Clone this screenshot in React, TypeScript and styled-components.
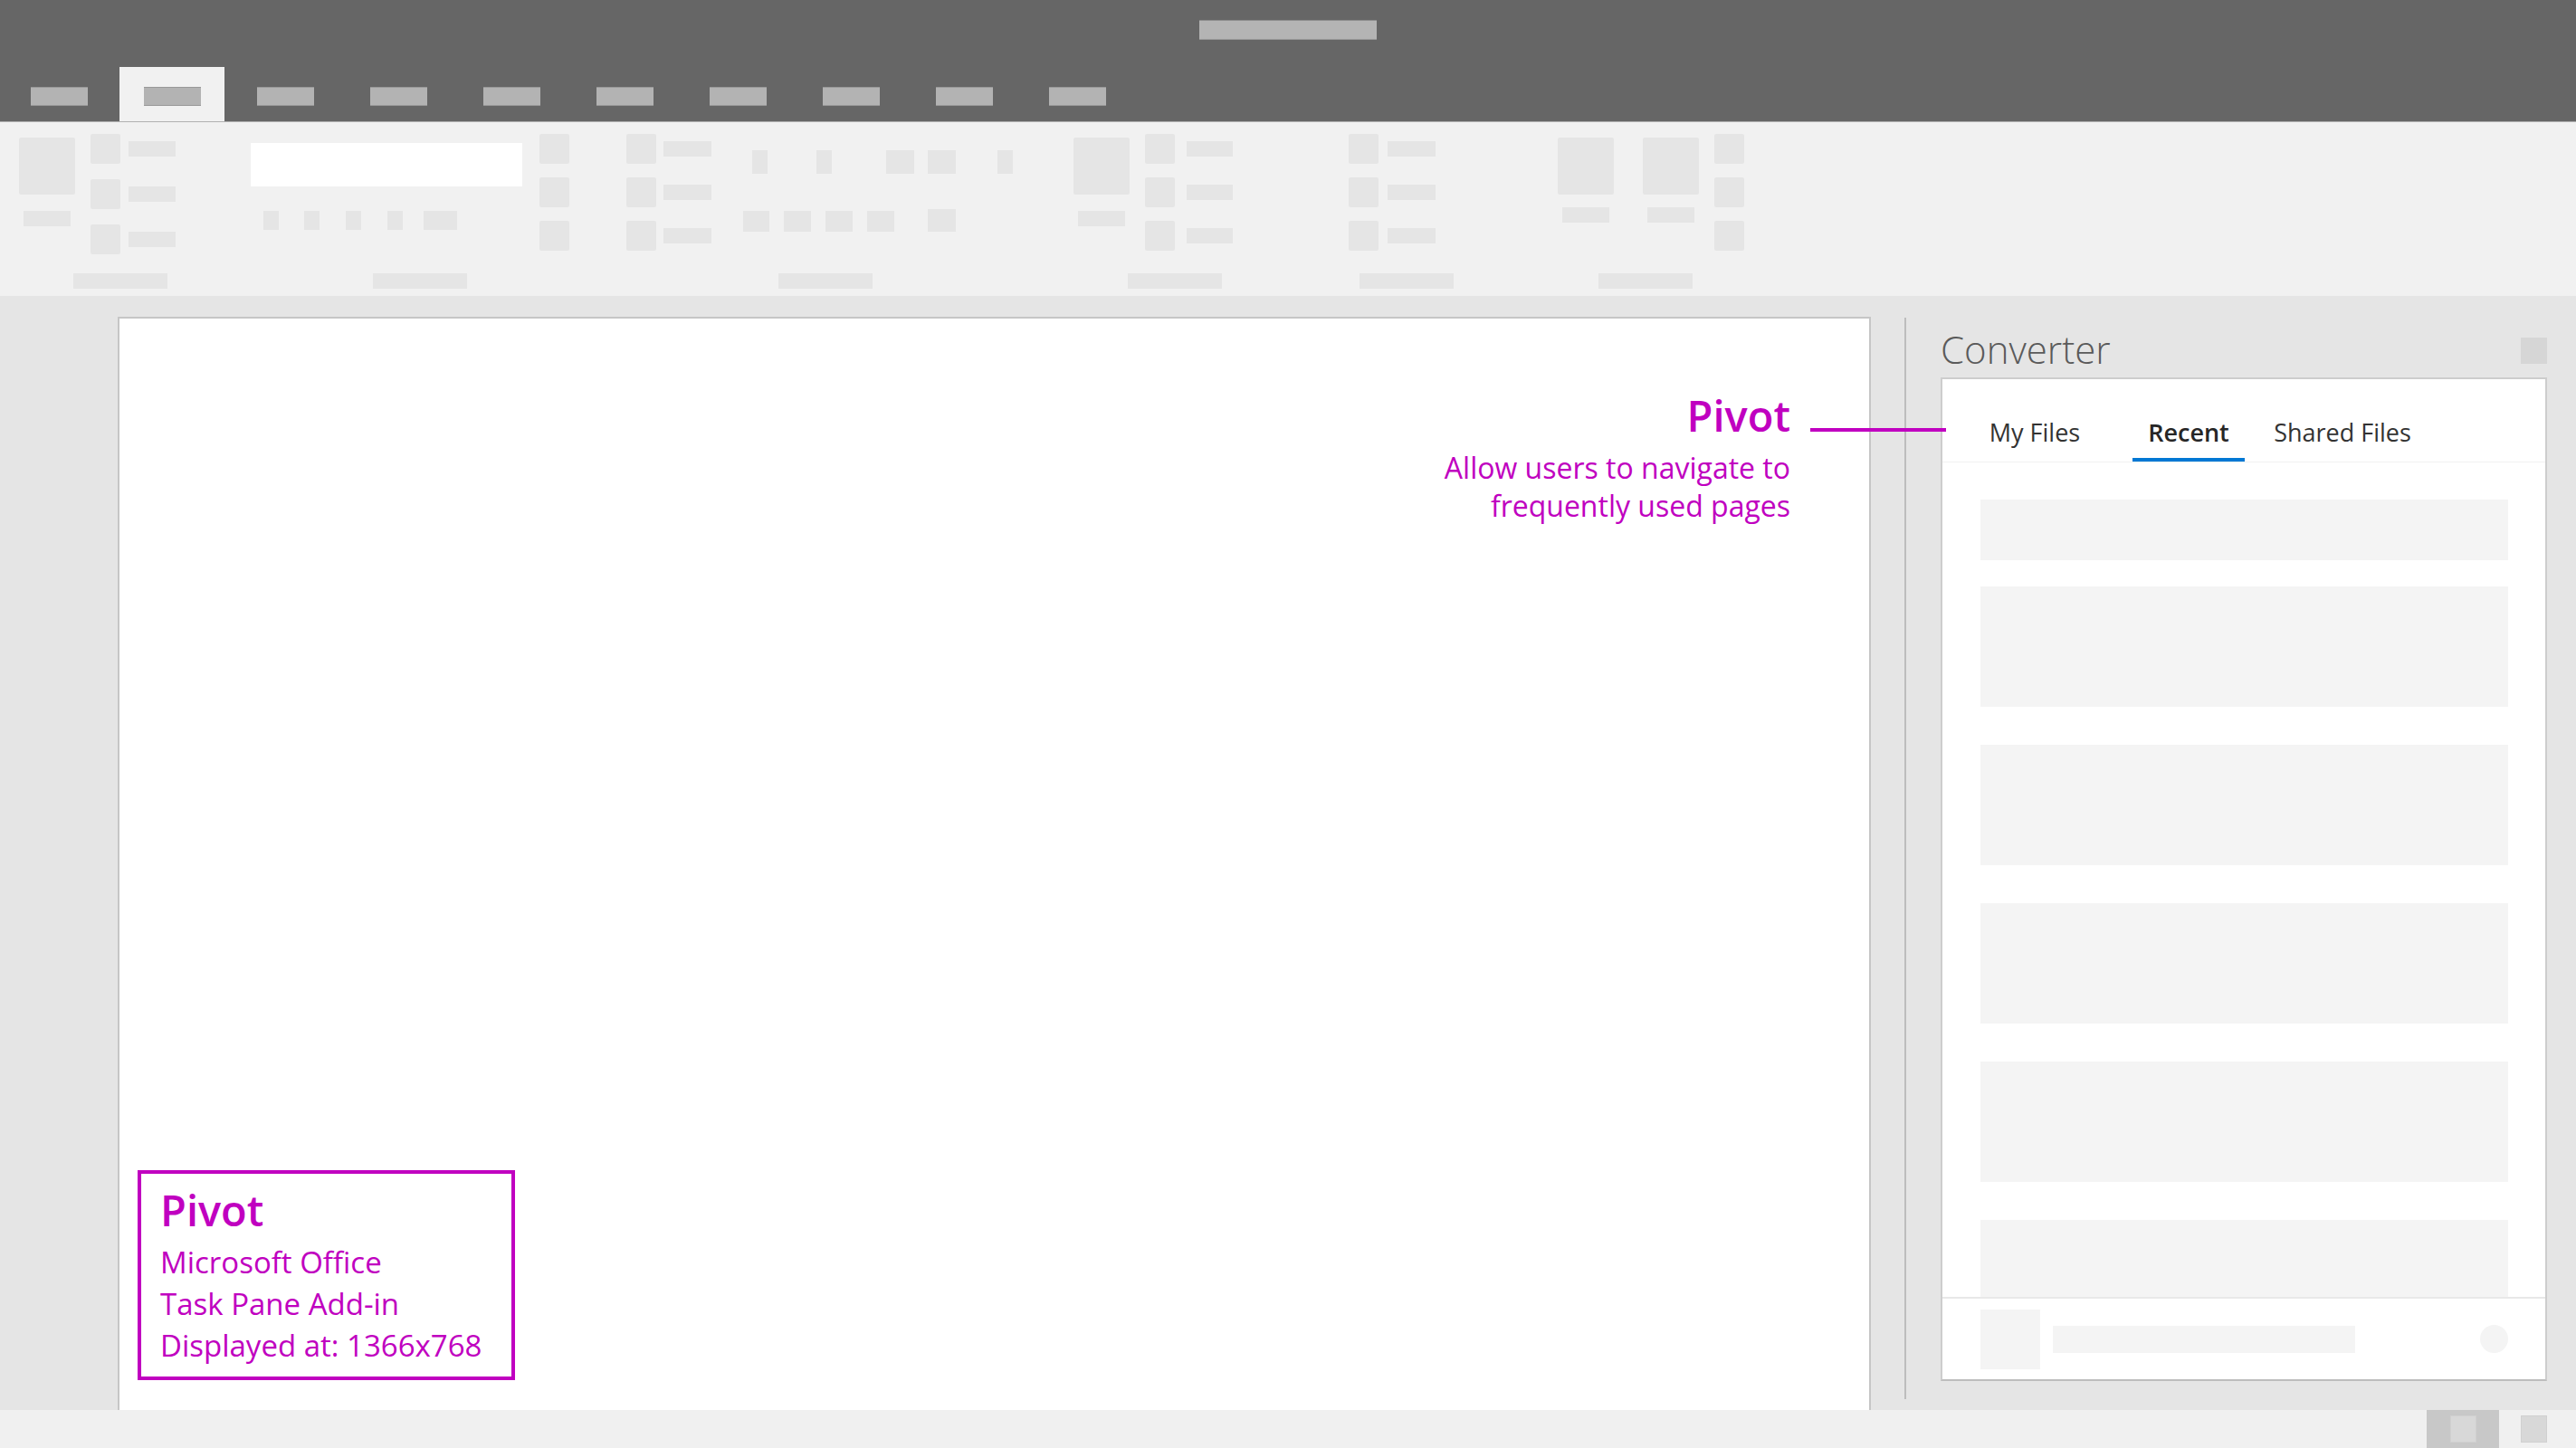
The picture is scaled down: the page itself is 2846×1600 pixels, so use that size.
import React from "react"
import styled, { createGlobalStyle } from "styled-components"

const magenta = "#c000c0"
const chip = "#e5e5e5"

const GlobalStyle = createGlobalStyle`
  html, body {
    margin: 0;
    padding: 0;
    background: #e5e5e5;
    font-family: "Open Sans", "Noto Sans", "Liberation Sans", sans-serif;
  }
`

const Screen = styled.div`
  width: 2846px;
  height: 1600px;
  display: flex;
  flex-direction: column;
  overflow: hidden;
`

/* title bar + ribbon tabs */
const TitleBar = styled.div`
  height: 135px;
  flex: none;
  background: #666666;
  border-bottom: 1px solid #b0b0b0;
  box-sizing: border-box;
  display: flex;
  flex-direction: column;
`
const TitlePlaceholder = styled.div`
  width: 196px;
  height: 22px;
  margin: 22px auto 0;
  background: #b4b4b4;
  box-shadow: inset 0 1px 0 #8c8c8c, inset 0 -1px 0 #9a9a9a;
`
const TabStrip = styled.div`
  margin-top: auto;
  height: 60px;
  display: flex;
  gap: 9px;
  padding-left: 7px;
`
const Tab = styled.div<{ $active?: boolean }>`
  width: 116px;
  height: 100%;
  background: ${p => (p.$active ? "#f1f1f1" : "transparent")};
  display: flex;
  justify-content: center;
`
const TabLabel = styled.div`
  width: 63px;
  height: 21px;
  margin-top: 22px;
  background: #b3b3b3;
  box-shadow: inset 0 1px 0 #999, inset 0 -1px 0 #999;
`

/* ribbon */
const Ribbon = styled.div`
  height: 192px;
  flex: none;
  background: #f1f1f1;
  display: flex;
  padding-left: 21px;
  box-sizing: border-box;
`
const Group = styled.div<{ $w: number; $ml?: number }>`
  width: ${p => p.$w}px;
  margin-left: ${p => p.$ml || 0}px;
  flex: none;
  display: flex;
  flex-direction: column;
  padding: 13px 0 8px;
  box-sizing: border-box;
`
const GroupBody = styled.div`
  flex: 1;
  display: flex;
  align-items: flex-start;
`
const GroupLabel = styled.div<{ $ml: number }>`
  width: 104px;
  height: 17px;
  margin-left: ${p => p.$ml}px;
  background: ${chip};
`
const BigTool = styled.div<{ $ml?: number; $gap?: number }>`
  display: flex;
  flex-direction: column;
  align-items: center;
  margin-left: ${p => p.$ml || 0}px;
  padding-top: 4px;
  gap: ${p => p.$gap ?? 18}px;
`
const BigIcon = styled.div`
  width: 62px;
  height: 63px;
  border-radius: 2px;
  background: ${chip};
`
const Caption = styled.div<{ $w?: number; $ml?: number }>`
  width: ${p => p.$w || 52}px;
  height: 17px;
  margin-left: ${p => p.$ml || 0}px;
  background: ${chip};
`
const ToolStack = styled.div<{ $ml?: number; $gap?: number }>`
  display: flex;
  flex-direction: column;
  margin-left: ${p => p.$ml || 0}px;
  gap: ${p => p.$gap ?? 15}px;
`
const ToolRow = styled.div`
  display: flex;
  align-items: center;
`
const SmallIcon = styled.div`
  width: 33px;
  height: 33px;
  border-radius: 2px;
  background: ${chip};
`
const SearchBox = styled.div`
  width: 300px;
  height: 48px;
  margin-top: 10px;
  background: #ffffff;
`
const Column = styled.div<{ $ml?: number }>`
  display: flex;
  flex-direction: column;
  margin-left: ${p => p.$ml || 0}px;
`
const PipRow = styled.div<{ $mt: number; $ml?: number }>`
  display: flex;
  align-items: flex-end;
  margin-top: ${p => p.$mt}px;
  margin-left: ${p => p.$ml || 0}px;
`
const Pip = styled.div<{ $w: number; $h: number; $ml?: number }>`
  width: ${p => p.$w}px;
  height: ${p => p.$h}px;
  margin-left: ${p => p.$ml || 0}px;
  background: ${chip};
`

/* document area */
const Workspace = styled.div`
  flex: 1;
  min-height: 0;
  position: relative;
  display: flex;
  align-items: stretch;
  padding-top: 23px;
  box-sizing: border-box;
  background: #e5e5e5;
`
const Page = styled.div`
  position: relative;
  width: 1937px;
  margin-left: 130px;
  flex: none;
  background: #ffffff;
  border: 2px solid #c6c6c6;
  border-bottom: none;
  box-sizing: border-box;
`
const Divider = styled.div`
  width: 2px;
  flex: none;
  margin: 1px 0 12px 37px;
  background: #bdbdbd;
`

/* task pane */
const Pane = styled.div`
  width: 670px;
  margin-left: 38px;
  flex: none;
  display: flex;
  flex-direction: column;
  padding-bottom: 32px;
  box-sizing: border-box;
`
const PaneHeader = styled.div`
  height: 67px;
  flex: none;
  padding-top: 15px;
  box-sizing: border-box;
  display: flex;
  justify-content: space-between;
  align-items: flex-start;
`
const PaneTitle = styled.div`
  font-size: 42px;
  line-height: 42px;
  font-weight: 300;
  color: #5a5a5a;
`
const CloseBox = styled.div`
  width: 29px;
  height: 29px;
  margin-top: 8px;
  background: #d6d6d6;
`
const Card = styled.div`
  flex: 1;
  min-height: 0;
  display: flex;
  flex-direction: column;
  background: #ffffff;
  border: 2px solid #cdcdcd;
  border-bottom-color: #bdbdbd;
`
const PivotBar = styled.div`
  height: 92px;
  flex: none;
  display: flex;
  align-items: flex-end;
  padding-left: 17px;
  border-bottom: 1px solid #f2f2f2;
  box-sizing: border-box;
`
const PivotLink = styled.div`
  width: 170px;
  display: flex;
  justify-content: center;
  white-space: nowrap;
`
const PivotText = styled.span<{ $active?: boolean }>`
  font-size: 27px;
  line-height: 36px;
  padding: 0 17px 10px;
  font-weight: ${p => (p.$active ? 600 : 400)};
  color: ${p => (p.$active ? "#262626" : "#333333")};
  border-bottom: 4px solid ${p => (p.$active ? "#0078d4" : "transparent")};
`
const FileList = styled.div`
  flex: 1;
  min-height: 0;
  overflow: hidden;
  padding: 41px 41px 0 42px;
`
const FileItem = styled.div<{ $h: number; $mt: number }>`
  height: ${p => p.$h}px;
  margin-top: ${p => p.$mt}px;
  background: #f4f4f4;
`
const PaneFooter = styled.div`
  height: 91px;
  flex: none;
  display: flex;
  align-items: center;
  padding: 0 41px 0 42px;
  border-top: 2px solid #e8e8e8;
  box-sizing: border-box;
`
const Thumb = styled.div`
  width: 66px;
  height: 66px;
  background: #f4f4f4;
`
const FooterBar = styled.div`
  width: 334px;
  height: 30px;
  margin-left: 14px;
  background: #f4f4f4;
`
const FooterDot = styled.div`
  width: 31px;
  height: 31px;
  margin-left: auto;
  border-radius: 50%;
  background: #f4f4f4;
`

/* status bar */
const StatusBar = styled.div`
  height: 42px;
  flex: none;
  background: #f0f0f0;
  display: flex;
  justify-content: flex-end;
  padding-right: 8px;
`
const StatusButton = styled.div<{ $w: number; $active?: boolean }>`
  width: ${p => p.$w}px;
  height: 100%;
  display: flex;
  align-items: center;
  justify-content: center;
  background: ${p => (p.$active ? "#c8c8c8" : "transparent")};
`
const StatusGlyph = styled.div`
  width: 29px;
  height: 30px;
  background: #d8d8d8;
  box-shadow: inset 0 0 0 1px #d0d0d0;
`

/* magenta annotations laid over the mock */
const Callout = styled.div`
  position: absolute;
  top: 104px;
  right: 696px;
  display: flex;
  align-items: flex-start;
  z-index: 2;
`
const CalloutText = styled.div`
  text-align: right;
  color: ${magenta};
`
const NoteTitle = styled.div`
  font-size: 47px;
  line-height: 56px;
  font-weight: 600;
`
const NoteLine = styled.div<{ $size: number; $lh: number }>`
  font-size: ${p => p.$size}px;
  line-height: ${p => p.$lh}px;
  white-space: nowrap;
`
const CalloutDesc = styled.div`
  margin-top: 9px;
`
const Connector = styled.div`
  width: 150px;
  height: 4px;
  margin: 42px 0 0 22px;
  background: ${magenta};
`
const InfoBox = styled.div`
  position: absolute;
  left: 20px;
  bottom: 33px;
  width: 417px;
  height: 232px;
  box-sizing: border-box;
  border: 4px solid ${magenta};
  padding: 12px 0 0 21px;
  color: ${magenta};
`
const InfoBody = styled.div`
  margin-top: 7px;
`

const tabs = Array.from({ length: 10 }, (_, i) => i)
const pivots = ["My Files", "Recent", "Shared Files"]
const files = [
  { h: 67, mt: 0 },
  { h: 133, mt: 29 },
  { h: 133, mt: 42 },
  { h: 133, mt: 42 },
  { h: 133, mt: 42 },
  { h: 133, mt: 42 }
]

// [width, left gap, height] of the little ribbon chips
const groupBPips = [[17, 0, 21], [17, 28, 21], [17, 29, 21], [17, 29, 21], [37, 23, 21]]
const groupCTop = [[17, 10, 26], [17, 54, 26], [31, 60, 26], [31, 15, 26], [17, 46, 26]]
const groupCBottom = [[29, 0, 23], [30, 16, 23], [30, 16, 23], [30, 16, 23], [31, 37, 25]]

function IconStack(props: { ml?: number; gap?: number }) {
  return (
    <ToolStack $ml={props.ml} $gap={props.gap}>
      <SmallIcon />
      <SmallIcon />
      <SmallIcon />
    </ToolStack>
  )
}

function CommandStack(props: { ml?: number; gap?: number; captionMl?: number; captionW?: number }) {
  return (
    <ToolStack $ml={props.ml} $gap={props.gap}>
      {[0, 1, 2].map(i => (
        <ToolRow key={i}>
          <SmallIcon />
          <Caption $ml={props.captionMl ?? 10} $w={props.captionW ?? 52} />
        </ToolRow>
      ))}
    </ToolStack>
  )
}

function Pips(props: { items: number[][]; mt: number; ml?: number }) {
  return (
    <PipRow $mt={props.mt} $ml={props.ml}>
      {props.items.map(([w, ml, h], i) => (
        <Pip key={i} $w={w} $h={h} $ml={ml} />
      ))}
    </PipRow>
  )
}

function RibbonArea() {
  return (
    <Ribbon>
      <Group $w={173}>
        <GroupBody>
          <BigTool>
            <BigIcon />
            <Caption />
          </BigTool>
          <CommandStack ml={17} gap={17} captionMl={9} />
        </GroupBody>
        <GroupLabel $ml={60} />
      </Group>

      <Group $w={352} $ml={83}>
        <GroupBody>
          <Column>
            <SearchBox />
            <Pips items={groupBPips} mt={27} ml={14} />
          </Column>
          <IconStack ml={19} />
        </GroupBody>
        <GroupLabel $ml={135} />
      </Group>

      <Group $w={427} $ml={63}>
        <GroupBody>
          <CommandStack captionMl={8} captionW={53} />
          <Column $ml={35}>
            <Pips items={groupCTop} mt={18} />
            <Pips items={groupCBottom} mt={39} />
          </Column>
        </GroupBody>
        <GroupLabel $ml={168} />
      </Group>

      <Group $w={176} $ml={67}>
        <GroupBody>
          <BigTool>
            <BigIcon />
            <Caption />
          </BigTool>
          <CommandStack ml={17} captionMl={13} captionW={51} />
        </GroupBody>
        <GroupLabel $ml={60} />
      </Group>

      <Group $w={116} $ml={128}>
        <GroupBody>
          <CommandStack captionW={53} />
        </GroupBody>
        <GroupLabel $ml={12} />
      </Group>

      <Group $w={206} $ml={115}>
        <GroupBody>
          <BigTool $gap={14}>
            <BigIcon />
            <Caption />
          </BigTool>
          <BigTool $ml={32} $gap={14}>
            <BigIcon />
            <Caption />
          </BigTool>
          <IconStack ml={17} />
        </GroupBody>
        <GroupLabel $ml={45} />
      </Group>
    </Ribbon>
  )
}

export default function App() {
  return (
    <Screen>
      <GlobalStyle />
      <TitleBar>
        <TitlePlaceholder />
        <TabStrip>
          {tabs.map(i => (
            <Tab key={i} $active={i === 1}>
              <TabLabel />
            </Tab>
          ))}
        </TabStrip>
      </TitleBar>

      <RibbonArea />

      <Workspace>
        <Page>
          <InfoBox>
            <NoteTitle>Pivot</NoteTitle>
            <InfoBody>
              <NoteLine $size={33} $lh={46}>Microsoft Office</NoteLine>
              <NoteLine $size={33} $lh={46}>Task Pane Add-in</NoteLine>
              <NoteLine $size={33} $lh={46}>Displayed at: 1366x768</NoteLine>
            </InfoBody>
          </InfoBox>
        </Page>
        <Divider />
        <Pane>
          <PaneHeader>
            <PaneTitle>Converter</PaneTitle>
            <CloseBox />
          </PaneHeader>
          <Card>
            <PivotBar>
              {pivots.map(name => (
                <PivotLink key={name}>
                  <PivotText $active={name === "Recent"}>{name}</PivotText>
                </PivotLink>
              ))}
            </PivotBar>
            <FileList>
              {files.map((f, i) => (
                <FileItem key={i} $h={f.h} $mt={f.mt} />
              ))}
            </FileList>
            <PaneFooter>
              <Thumb />
              <FooterBar />
              <FooterDot />
            </PaneFooter>
          </Card>
        </Pane>

        <Callout>
          <CalloutText>
            <NoteTitle>Pivot</NoteTitle>
            <CalloutDesc>
              <NoteLine $size={32} $lh={42}>Allow users to navigate to</NoteLine>
              <NoteLine $size={32} $lh={42}>frequently used pages</NoteLine>
            </CalloutDesc>
          </CalloutText>
          <Connector />
        </Callout>
      </Workspace>

      <StatusBar>
        <StatusButton $w={80} $active>
          <StatusGlyph />
        </StatusButton>
        <StatusButton $w={77}>
          <StatusGlyph />
        </StatusButton>
      </StatusBar>
    </Screen>
  )
}
